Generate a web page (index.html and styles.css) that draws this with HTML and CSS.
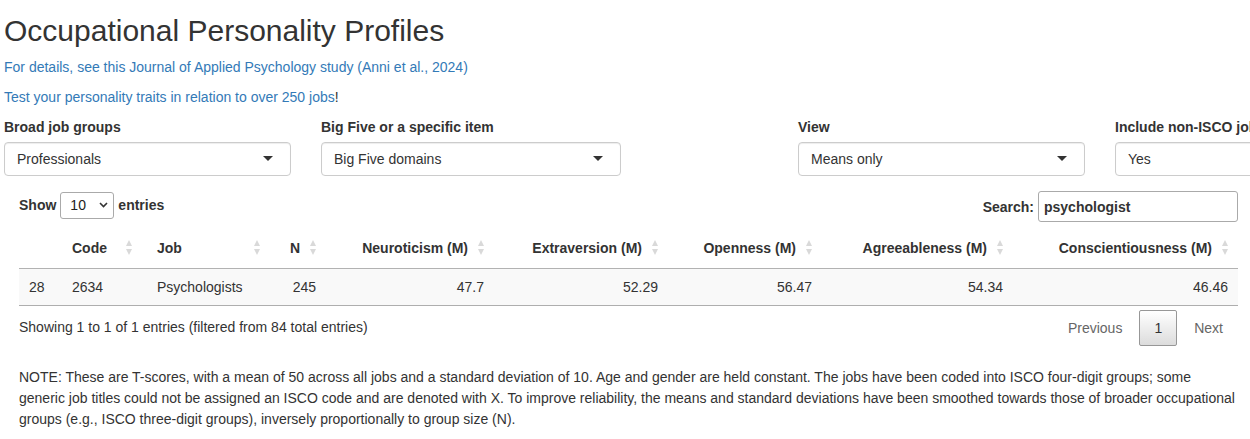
FILE: index.html
```html
<!DOCTYPE html>
<html lang="en">
<head>
<meta charset="utf-8">
<title>Occupational Personality Profiles</title>
<link rel="stylesheet" href="styles.css">
</head>
<body>
<div class="page">
  <h2 class="title">Occupational Personality Profiles</h2>
  <p class="line"><a href="#">For details, see this Journal of Applied Psychology study (Anni et al., 2024)</a></p>
  <p class="line"><a href="#">Test your personality traits in relation to over 250 jobs</a>!</p>

  <div class="controls">
    <div class="col col-narrow">
      <div class="form-group">
        <label class="ctl-label">Broad job groups</label>
        <div class="selectize">Professionals</div>
      </div>
    </div>
    <div class="col col-wide">
      <div class="form-group">
        <label class="ctl-label">Big Five or a specific item</label>
        <div class="selectize">Big Five domains</div>
      </div>
    </div>
    <div class="col col-narrow">
      <div class="form-group">
        <label class="ctl-label">View</label>
        <div class="selectize">Means only</div>
      </div>
    </div>
    <div class="col col-narrow">
      <div class="form-group">
        <label class="ctl-label">Include non-ISCO jobs</label>
        <div class="selectize">Yes</div>
      </div>
    </div>
  </div>

  <div class="dt">
    <div class="dt-top">
      <div class="length">Show <span class="len-select">10<svg class="chev" width="9" height="6" viewBox="0 0 9 6"><polyline points="1,1 4.5,4.5 8,1" fill="none" stroke="#333" stroke-width="1.6"/></svg></span> entries</div>
      <div class="filter">Search:<input class="search" type="text" value="psychologist" readonly></div>
    </div>
    <table class="grid">
      <colgroup>
        <col class="w-idx"><col class="w-code"><col class="w-job"><col class="w-n"><col class="w-neu"><col class="w-ext"><col class="w-ope"><col class="w-agr"><col class="w-con">
      </colgroup>
      <thead>
        <tr>
          <th class="nosort"></th>
          <th class="sort">Code</th>
          <th class="sort job">Job</th>
          <th class="sort r">N</th>
          <th class="sort r">Neuroticism (M)</th>
          <th class="sort r">Extraversion (M)</th>
          <th class="sort r">Openness (M)</th>
          <th class="sort r">Agreeableness (M)</th>
          <th class="sort r">Conscientiousness (M)</th>
        </tr>
      </thead>
      <tbody>
        <tr>
          <td>28</td>
          <td>2634</td>
          <td class="job">Psychologists</td>
          <td class="r">245</td>
          <td class="r">47.7</td>
          <td class="r">52.29</td>
          <td class="r">56.47</td>
          <td class="r">54.34</td>
          <td class="r">46.46</td>
        </tr>
      </tbody>
    </table>
    <div class="dt-bottom">
      <div class="info">Showing 1 to 1 of 1 entries (filtered from 84 total entries)</div>
      <div class="paginate">
        <span class="pbtn disabled">Previous</span>
        <span class="pbtn current">1</span>
        <span class="pbtn disabled">Next</span>
      </div>
    </div>
  </div>

  <p class="note">NOTE: These are T-scores, with a mean of 50 across all jobs and a standard deviation of 10. Age and gender are held constant. The jobs have been coded into ISCO four-digit groups; some generic job titles could not be assigned an ISCO code and are denoted with X. To improve reliability, the means and standard deviations have been smoothed towards those of broader occupational groups (e.g., ISCO three-digit groups), inversely proportionally to group size (N).</p>
</div>
</body>
</html>
```

FILE: styles.css
```css
html, body {
  margin: 0;
  padding: 0;
  overflow: hidden;
  background: #fff;
}

body {
  font-family: "Liberation Sans", Arial, Helvetica, sans-serif;
  font-size: 14px;
  line-height: 20px;
  color: #333;
}

.page {
  padding-left: 4px;
}

.title {
  font-size: 30px;
  line-height: 33px;
  font-weight: 400;
  margin: 14px 0 10px;
  color: #333;
}

.line {
  margin: 0 0 10px;
}

a {
  color: #337ab7;
  text-decoration: none;
}

/* input controls row */
.controls {
  display: flex;
  gap: 30px;
}

.col {
  flex: none;
}

.col-narrow {
  width: 287px;
}

.col-wide {
  width: 447px;
}

.form-group {
  width: 300px;
  max-width: 100%;
  margin-bottom: 15px;
}

.ctl-label {
  display: block;
  font-weight: 700;
  margin-bottom: 5px;
  white-space: nowrap;
}

.selectize {
  position: relative;
  box-sizing: border-box;
  height: 34px;
  padding: 6px 12px;
  border: 1px solid #ccc;
  border-radius: 4px;
  box-shadow: inset 0 1px 1px rgba(0, 0, 0, 0.075);
  background: #fff;
  white-space: nowrap;
  overflow: hidden;
}

.selectize::after {
  content: "";
  position: absolute;
  right: 17px;
  top: 50%;
  margin-top: -3px;
  width: 0;
  height: 0;
  border-style: solid;
  border-width: 5px 5px 0 5px;
  border-color: #333 transparent transparent transparent;
}

/* datatable */
.dt {
  margin-left: 15px;
  width: 1219px;
}

.dt-top {
  display: flex;
  justify-content: space-between;
  align-items: flex-start;
}

.length {
  display: flex;
  align-items: center;
  font-weight: 700;
  height: 28px;
}

.len-select {
  display: inline-flex;
  align-items: center;
  justify-content: space-between;
  box-sizing: border-box;
  width: 54px;
  height: 27px;
  margin: 0 4px;
  padding: 0 5px 0 9px;
  border: 1px solid #aaa;
  border-radius: 3px;
  font-weight: 400;
  color: #222;
}

.chev {
  display: block;
}

.filter {
  display: flex;
  align-items: center;
  font-weight: 700;
}

.search {
  box-sizing: border-box;
  width: 200px;
  height: 31px;
  margin-left: 4px;
  padding: 5px;
  border: 1px solid #aaa;
  border-radius: 3px;
  font-family: inherit;
  font-size: 14px;
  font-weight: 700;
  color: #333;
  background: transparent;
  outline: none;
}

.grid {
  width: 1219px;
  table-layout: fixed;
  border-collapse: separate;
  border-spacing: 0;
  margin-top: 6px;
}

.w-idx { width: 43px; }
.w-code { width: 80px; }
.w-job { width: 128px; }
.w-n { width: 56px; }
.w-neu { width: 168px; }
.w-ext { width: 174px; }
.w-ope { width: 154px; }
.w-agr { width: 191px; }
.w-con { width: 225px; }

.grid th {
  position: relative;
  padding: 10px 26px 10px 10px;
  font-weight: 700;
  text-align: left;
  line-height: 20px;
  white-space: nowrap;
  border-bottom: 1px solid rgba(0, 0, 0, 0.3);
}

.grid th.nosort {
  padding-right: 10px;
}

.grid th.sort::before,
.grid th.sort::after {
  content: "";
  position: absolute;
  right: 10px;
  top: 50%;
  width: 0;
  height: 0;
  border-left: 3.5px solid transparent;
  border-right: 3.5px solid transparent;
}

.grid th.sort::before {
  margin-top: -8px;
  border-bottom: 6px solid #d9d9d9;
}

.grid th.sort::after {
  margin-top: 1px;
  border-top: 6px solid #d9d9d9;
}

.grid td {
  padding: 8px 10px;
  line-height: 20px;
  background: #f9f9f9;
  border-bottom: 1px solid rgba(0, 0, 0, 0.3);
  white-space: nowrap;
}

.grid .job {
  padding-left: 15px;
}

.grid .r {
  text-align: right;
}

.dt-bottom {
  display: flex;
  justify-content: space-between;
  align-items: flex-start;
}

.info {
  padding-top: 10.5px;
}

.paginate {
  display: flex;
  padding-top: 3.5px;
}

.pbtn {
  display: block;
  box-sizing: border-box;
  min-width: 1.5em;
  padding: 7px 14px;
  margin-left: 2px;
  border: 1px solid transparent;
  border-radius: 2px;
  text-align: center;
  line-height: 20px;
}

.pbtn.disabled {
  color: #666;
}

.pbtn.current {
  color: #333;
  border-color: #979797;
  background: linear-gradient(to bottom, #fff 0%, #dcdcdc 100%);
}

.note {
  margin: 21px 0 0 15px;
  width: 1219px;
  line-height: 21px;
}
```
